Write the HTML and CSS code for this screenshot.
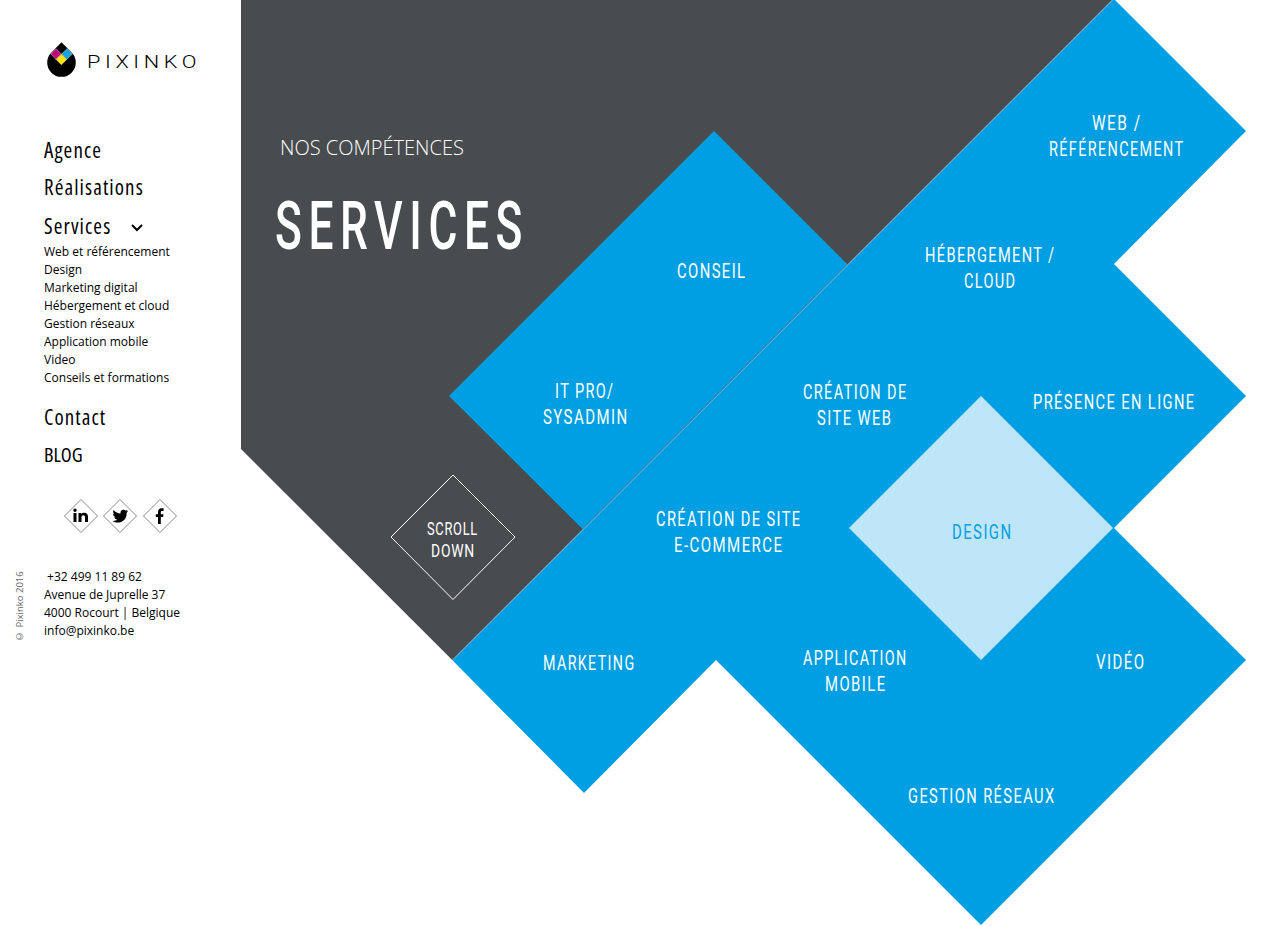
FILE: index.html
```html
<!DOCTYPE html>
<html lang="fr">
<head>
  <meta charset="UTF-8">
  <meta name="viewport" content="width=device-width, initial-scale=1.0">
  <title>Pixinko - Services</title>
  <link rel="stylesheet" href="styles.css">
</head>
<body>
  <aside class="sidebar">
    <a class="logo" href="#">
      <svg width="156" height="36" viewBox="0 0 156 36">
        <path d="M15.5 .3 L5.4 10.4 A14.3 14.3 0 1 0 25.6 10.4 Z" fill="#000"/>
        <path class="logo-ink" d="M10 6.7 L15.3 12 L10 17.3 L4.7 12 Z" fill="#c5007c"/>
        <path class="logo-ink" d="M21 6.7 L26.3 12 L21 17.3 L15.7 12 Z" fill="#12a5e3"/>
        <path class="logo-ink" d="M15.4 12.2 L20.7 17.5 L15.4 22.8 L10.1 17.5 Z" fill="#ffe600"/>
        <text class="logo-text" x="41" y="26" textLength="114" lengthAdjust="spacingAndGlyphs">PIXINKO</text>
      </svg>
    </a>

    <nav class="nav">
      <a class="nav-item" href="#">Agence</a>
      <a class="nav-item" href="#">Réalisations</a>
      <div class="nav-open">
        <a class="nav-item" href="#">Services</a>
        <svg class="chevron" width="12" height="8" viewBox="0 0 12 8"><path d="M1 1 L6 6 L11 1" fill="none" stroke="#000" stroke-width="2"/></svg>
      </div>
      <ul class="subnav">
        <li><a href="#">Web et référencement</a></li>
        <li><a href="#">Design</a></li>
        <li><a href="#">Marketing digital</a></li>
        <li><a href="#">Hébergement et cloud</a></li>
        <li><a href="#">Gestion réseaux</a></li>
        <li><a href="#">Application mobile</a></li>
        <li><a href="#">Video</a></li>
        <li><a href="#">Conseils et formations</a></li>
      </ul>
      <a class="nav-item" href="#">Contact</a>
      <a class="nav-item nav-blog" href="#">BLOG</a>
    </nav>

    <div class="social">
      <a class="social-link" href="#">
        <svg width="34" height="34" viewBox="0 0 34 34">
          <path class="social-frame" d="M17 .5 L33.5 17 L17 33.5 L.5 17 Z"/>
          <path d="M9.5 14 H12.5 V23 H9.5 Z M11 9.5 A1.7 1.7 0 1 1 11 12.9 A1.7 1.7 0 1 1 11 9.5 Z M14.5 14 H17.3 V15.3 C18 14.2 19 13.8 20.3 13.8 C23 13.8 24 15.5 24 18 V23 H21 V18.6 C21 17.2 20.6 16.3 19.4 16.3 C18.1 16.3 17.5 17.2 17.5 18.6 V23 H14.5 Z"/>
        </svg>
      </a>
      <a class="social-link" href="#">
        <svg width="34" height="34" viewBox="0 0 34 34">
          <path class="social-frame" d="M17 .5 L33.5 17 L17 33.5 L.5 17 Z"/>
          <path transform="translate(1.7 1.7) scale(.9)" d="M26 11.5 C25.3 11.8 24.6 12 23.9 12.1 C24.7 11.6 25.2 10.9 25.5 10.1 C24.8 10.5 24 10.8 23.2 11 C21.6 9.3 18.9 9.7 17.9 11.6 C17.5 12.4 17.4 13.3 17.6 14.1 C14.6 14 11.8 12.5 9.9 10.2 C8.9 11.9 9.4 14 11 15.1 C10.4 15.1 9.8 14.9 9.3 14.6 C9.3 16.4 10.6 18 12.3 18.3 C11.8 18.5 11.2 18.5 10.7 18.4 C11.2 19.9 12.6 21 14.2 21 C12.6 22.2 10.7 22.8 8.7 22.6 C15.8 27 25.1 22.3 24.3 13.6 C25 13.1 25.6 12.4 26 11.5 Z"/>
        </svg>
      </a>
      <a class="social-link" href="#">
        <svg width="34" height="34" viewBox="0 0 34 34">
          <path class="social-frame" d="M17 .5 L33.5 17 L17 33.5 L.5 17 Z"/>
          <path d="M15 25 V18 H12.8 V15.2 H15 V13 C15 10.5 16.4 9.3 18.6 9.3 C19.5 9.3 20.3 9.4 20.6 9.4 V11.9 H19.2 C18 11.9 17.8 12.5 17.8 13.3 V15.2 H20.5 L20.1 18 H17.8 V25 Z"/>
        </svg>
      </a>
    </div>

    <div class="contact">
      <small class="copyright">© Pixinko 2016</small>
      <address class="address">
        &nbsp;+32 499 11 89 62<br>
        Avenue de Juprelle 37<br>
        4000 Rocourt | Belgique<br>
        info@pixinko.be
      </address>
    </div>
  </aside>

  <main class="main">
    <p class="kicker">NOS COMPÉTENCES</p>

    <svg class="diagram" width="1039" height="926" viewBox="241 0 1039 926">
      <polygon class="dark" points="241,0 1112.2,0 452.2,660 241,449"/>
      <polygon class="blue" points="714,131 847.3,264.3 582.5,529 449,396"/>
      <polygon class="blue" points="1112.7,0 1115,0 1246,131 1114,264 1246,396 1114,528 1246,660 981,925 716,660 584,793 452.4,660.3"/>
      <polygon class="pale" points="981,396 1113,528 981,660 849,528"/>
      <polygon class="scroll-frame" points="453,475 515,537 453,599.5 391,537"/>

      <text class="title" x="275" y="249" textLength="254" lengthAdjust="spacingAndGlyphs">SERVICES</text>

      <text class="scroll-label" x="427" y="535" textLength="51" lengthAdjust="spacingAndGlyphs">Scroll</text>
      <text class="scroll-label" x="431" y="557" textLength="44" lengthAdjust="spacingAndGlyphs">Down</text>

      <text class="label" x="1092" y="130" textLength="49.5" lengthAdjust="spacingAndGlyphs">WEB /</text>
      <text class="label" x="1049" y="156" textLength="135.5" lengthAdjust="spacingAndGlyphs">RÉFÉRENCEMENT</text>
      <text class="label" x="677" y="278" textLength="69.5" lengthAdjust="spacingAndGlyphs">CONSEIL</text>
      <text class="label" x="925" y="262" textLength="130.5" lengthAdjust="spacingAndGlyphs">HÉBERGEMENT /</text>
      <text class="label" x="964" y="288" textLength="52.5" lengthAdjust="spacingAndGlyphs">CLOUD</text>
      <text class="label" x="555" y="398" textLength="59.5" lengthAdjust="spacingAndGlyphs">IT PRO/</text>
      <text class="label" x="543" y="424" textLength="85.5" lengthAdjust="spacingAndGlyphs">SYSADMIN</text>
      <text class="label" x="803" y="399" textLength="104.5" lengthAdjust="spacingAndGlyphs">CRÉATION DE</text>
      <text class="label" x="817" y="425" textLength="75.5" lengthAdjust="spacingAndGlyphs">SITE WEB</text>
      <text class="label" x="1033" y="409" textLength="162.5" lengthAdjust="spacingAndGlyphs">PRÉSENCE EN LIGNE</text>
      <text class="label label-active" x="952" y="539" textLength="60.5" lengthAdjust="spacingAndGlyphs">DESIGN</text>
      <text class="label" x="656" y="526" textLength="145.5" lengthAdjust="spacingAndGlyphs">CRÉATION DE SITE</text>
      <text class="label" x="674" y="552" textLength="109.5" lengthAdjust="spacingAndGlyphs">E-COMMERCE</text>
      <text class="label" x="543" y="670" textLength="92.5" lengthAdjust="spacingAndGlyphs">MARKETING</text>
      <text class="label" x="803" y="665" textLength="104.5" lengthAdjust="spacingAndGlyphs">APPLICATION</text>
      <text class="label" x="825" y="691" textLength="61.5" lengthAdjust="spacingAndGlyphs">MOBILE</text>
      <text class="label" x="1096" y="669" textLength="49.5" lengthAdjust="spacingAndGlyphs">VIDÉO</text>
      <text class="label" x="908" y="803" textLength="147.5" lengthAdjust="spacingAndGlyphs">GESTION RÉSEAUX</text>
    </svg>
  </main>
</body>
</html>
```

FILE: styles.css
```css
html, body {
  margin: 0;
  height: 926px;
  overflow: hidden;
}
body {
  display: flex;
  font-family: "Open Sans", sans-serif;
  color: #000;
  background: #fff;
}
a {
  color: inherit;
  text-decoration: none;
}

/* sidebar */
.sidebar {
  width: 241px;
  flex: none;
  padding: 42px 0 0 14px;
  box-sizing: border-box;
}
.logo {
  display: block;
  height: 36px;
  margin-left: 32px;
}
.logo-ink {
  stroke: #fff;
  stroke-width: .4;
}
.logo-text {
  font-family: Roboto, sans-serif;
  font-weight: 300;
  font-size: 19px;
  letter-spacing: 4px;
}
.nav {
  margin: 57px 0 0 30px;
}
.nav-item {
  display: block;
  height: 37px;
  font-family: "Open Sans", sans-serif;
  font-stretch: 75%;
  font-size: 21px;
  line-height: 30px;
  letter-spacing: 1.1px;
}
.nav-blog {
  margin-top: 1px;
  font-size: 20px;
  letter-spacing: 0;
}
.nav-open {
  display: flex;
  height: 34px;
  padding-top: 2px;
  box-sizing: border-box;
}
.chevron {
  margin: 13px 0 0 20px;
}
.subnav {
  list-style: none;
  margin: 0 0 15px;
  padding: 0;
  font-size: 12px;
  line-height: 18px;
}
.social {
  display: flex;
  gap: 5.3px;
  margin: 22px 0 0 50px;
}
.social-link {
  display: block;
  height: 34px;
}
.social-frame {
  fill: #fff;
  stroke: #888;
  stroke-width: 1;
}
.contact {
  display: flex;
  margin-top: 35px;
}
.copyright {
  writing-mode: vertical-rl;
  transform: rotate(180deg);
  width: 12px;
  margin: 0 18px -3px 0;
  color: #666;
  font-size: 9.5px;
  line-height: 12px;
  text-align: left;
}
.address {
  font-style: normal;
  font-size: 12px;
  line-height: 18px;
}

/* main */
.main {
  position: relative;
  flex: 1;
}
.diagram {
  display: block;
}
.dark { fill: #494c4f; }
.blue { fill: #009ee2; }
.pale { fill: #bfe6f8; }
.scroll-frame {
  fill: none;
  stroke: #fff;
  stroke-width: 1;
}
.kicker {
  position: absolute;
  left: 39px;
  top: 134px;
  z-index: 1;
  margin: 0;
  color: #fff;
  font-size: 20px;
  line-height: 28px;
  font-weight: 300;
}
.title {
  font-family: Roboto, sans-serif;
  font-weight: 500;
  font-size: 67px;
  letter-spacing: 10px;
  fill: #fff;
}
.label {
  font-family: Roboto, sans-serif;
  font-weight: 450;
  font-size: 21px;
  letter-spacing: 2px;
  fill: #fff;
}
.label-active {
  fill: #009ee2;
}
.scroll-label {
  font-family: Roboto, sans-serif;
  font-weight: 400;
  font-size: 18px;
  letter-spacing: 1px;
  text-transform: uppercase;
  fill: #fff;
}
```
